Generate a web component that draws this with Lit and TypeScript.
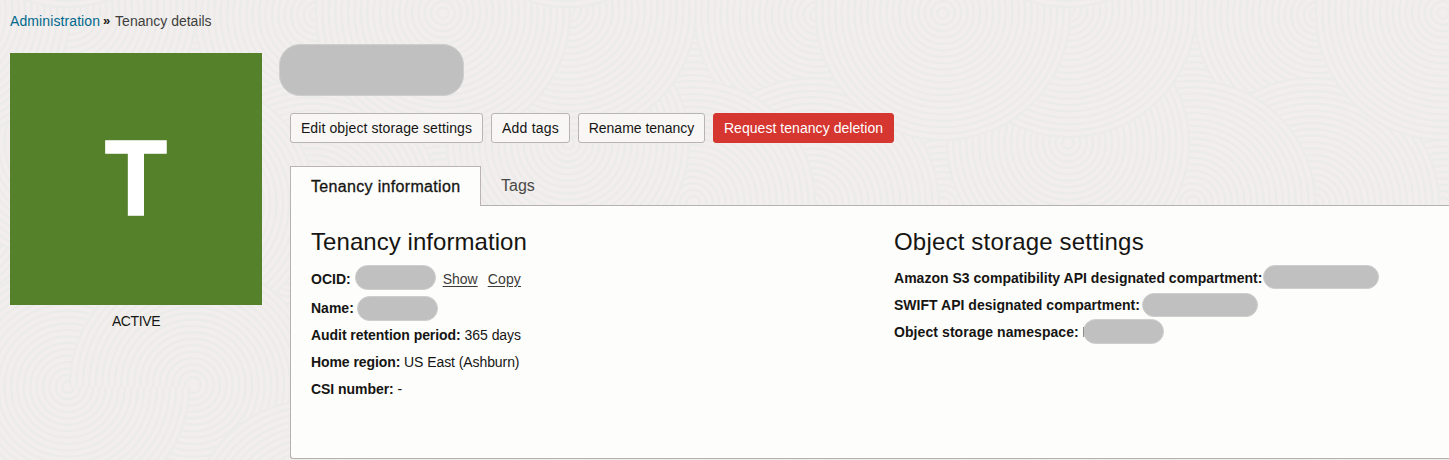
import { LitElement, html, css, svg } from "lit";
import { customElement, property } from "lit/decorators.js";

interface Disc {
  x: number;
  y: number;
  r: number;
  lower?: boolean;
}

// Raked-sand background: overlapping ringed discs, repeated every 500px.
const DISCS: Disc[] = [
  { x: 193, y: 135, r: 125 },
  { x: 443, y: 205, r: 130 },
  { x: 317, y: 15, r: 123 },
  { x: 312, y: 205, r: 128 },
  { x: 193, y: 203, r: 123 },
  { x: 68, y: 143, r: 122 },
  { x: 69, y: 10, r: 128 },
  { x: 443, y: 13, r: 128 },
  { x: 67, y: -115, r: 123 },
  { x: 443, y: 400, r: 125 },
  { x: 68, y: 387, r: 122 },
  { x: 193, y: 385, r: 124 },
  { x: 68, y: 387, r: 122, lower: true },
  { x: 315, y: 525, r: 126 },
];
const PERIOD = 500;
const RING = 6.4;

@customElement("sand-texture")
export class SandTexture extends LitElement {
  static styles = css`
    :host { display: block; }
    svg { display: block; width: 100%; height: 100%; }
    .ground { fill: #f1eeed; }
    .ring { fill: none; stroke: #ebebe9; stroke-width: 2.2; }
  `;

  private disc(d: Disc, shift: number) {
    const x = d.x + shift;
    const radii = Array.from({ length: Math.floor(d.r / RING) }, (_, i) => d.r - 1 - i * RING);
    const arc = (r: number) =>
      d.lower
        ? `M${x - r} ${d.y}A${r} ${r} 0 0 0 ${x + r} ${d.y}`
        : `M${x - r} ${d.y}a${r} ${r} 0 1 0 ${2 * r} 0a${r} ${r} 0 1 0 ${-2 * r} 0`;
    return svg`<path class="ground" d=${arc(d.r)}></path>${radii.map((r) => svg`<path class="ring" d=${arc(r)}></path>`)}`;
  }

  render() {
    return html`<svg aria-hidden="true">
      ${DISCS.map((d) => [-1, 0, 1, 2].map((n) => this.disc(d, n * PERIOD)))}
    </svg>`;
  }
}

@customElement("detail-row")
export class DetailRow extends LitElement {
  @property() label = "";
  static styles = css`
    :host { display: flex; height: 27px; line-height: 27px; white-space: pre; }
    .label { font-weight: 700; }
  `;
  render() {
    return html`<span class="label">${this.label}</span><slot></slot>`;
  }
}

@customElement("app-root")
export class AppRoot extends LitElement {
  static styles = css`
    :host {
      display: block;
      position: relative;
      height: 460px;
      overflow: hidden;
      background: #f1eeed;
      font: 14px/20px "Liberation Sans", Arial, sans-serif;
      color: #161513;
    }
    * { box-sizing: border-box; }
    .texture { position: absolute; inset: 0; }
    .page { position: relative; }
    .crumbs { display: flex; height: 53px; padding: 11px 0 0 10px; color: #3f3e3c; white-space: pre; }
    .crumbs a { color: #00688c; letter-spacing: 0.1px; }
    .sep { width: 15px; padding-left: 3px; font-size: 13px; font-weight: 700; color: #161513; }
    .main { display: grid; grid-template-columns: 252px minmax(0, 1fr); column-gap: 28px; padding-left: 10px; }
    .tile {
      display: flex;
      align-items: center;
      justify-content: center;
      height: 252px;
      background: #54812a;
      color: #fff;
      font-size: 108px;
      font-weight: 700;
    }
    .letter { transform: translateY(-1px) scaleX(0.945); -webkit-text-stroke: 1.5px #fff; }
    .state { margin-top: 6px; text-align: center; letter-spacing: -0.4px; }
    .pill { flex: none; background: #c0c0c0; border: 1px solid #cecece; border-radius: 13px; }
    .title { width: 185px; height: 52px; margin: -9px 0 0 -11px; border-radius: 21px; }
    .actions { display: flex; gap: 8px; margin-top: 17px; }
    button {
      height: 30px;
      padding: 0 0 1px;
      border: 1px solid #b8b4af;
      border-radius: 3px;
      background: #f8f7f5;
      color: #161513;
      font: inherit;
      white-space: nowrap;
    }
    .edit { width: 193px; letter-spacing: 0.11px; }
    .add { width: 79px; letter-spacing: 0.2px; }
    .rename { width: 127px; letter-spacing: -0.03px; }
    .delete { width: 181px; background: #d63630; border-color: #d63630; color: #fff; letter-spacing: 0.05px; }
    .tabs { display: flex; height: 40px; margin-top: 23px; font-size: 16px; line-height: 38px; }
    .tab { padding: 1px 20px 0; color: #4a4947; }
    .active {
      position: relative;
      width: 191px;
      height: 40px;
      padding: 1px 0 0 20px;
      border: 1px solid #bab5b0;
      border-bottom: 0;
      background: #fdfdfb;
      color: #161513;
      letter-spacing: 0.33px;
      -webkit-text-stroke: 0.3px #161513;
      white-space: nowrap;
      z-index: 1;
    }
    .panel {
      display: grid;
      grid-template-columns: 583px 1fr;
      height: 254px;
      margin-top: -1px;
      padding: 22px 0 0 20px;
      border: 1px solid #b5b1ad;
      border-right: 0;
      border-radius: 0 0 0 3px;
      background: #fdfdfb;
    }
    h2 { margin: 0; font-size: 24px; font-weight: 400; line-height: 28px; letter-spacing: 0.06px; }
    .left h2 { margin-bottom: 10px; }
    .right h2 { margin-bottom: 9px; letter-spacing: 0.19px; }
    .ocid { margin-bottom: 2px; }
    .ocid .pill { width: 81px; height: 25px; margin: -1px 7px 0 4px; }
    .name .pill { width: 81px; height: 25px; margin: 1px 0 0 3px; }
    .link { margin-right: 10px; color: #3b3a38; text-decoration: underline; text-underline-offset: 2px; }
    .copy { letter-spacing: 0.15px; }
    .audit { letter-spacing: -0.05px; }
    .home { letter-spacing: -0.08px; }
    .csi { letter-spacing: -0.05px; }
    .s3 { letter-spacing: 0.02px; }
    .s3 .pill { width: 116px; height: 24px; margin: 0 0 0 1px; }
    .swift { letter-spacing: 0.02px; }
    .swift .pill { width: 116px; height: 24px; margin: 1px 0 0 2px; }
    .ns { letter-spacing: 0.08px; }
    .ns .pill { position: relative; width: 81px; height: 25px; margin: 0 0 0 4px; }
    .ns .pill::before { content: ""; position: absolute; left: -1px; top: 7px; width: 1px; height: 10px; background: #8d8d8b; }
  `;

  render() {
    return html`
      <sand-texture class="texture"></sand-texture>
      <div class="page">
        <nav class="crumbs"><a>Administration</a><span class="sep">»</span><span>Tenancy details</span></nav>
        <div class="main">
          <aside>
            <div class="tile"><span class="letter">T</span></div>
            <div class="state">ACTIVE</div>
          </aside>
          <main>
            <div class="pill title"></div>
            <div class="actions">
              <button class="edit">Edit object storage settings</button>
              <button class="add">Add tags</button>
              <button class="rename">Rename tenancy</button>
              <button class="delete">Request tenancy deletion</button>
            </div>
            <div class="tabs">
              <div class="active">Tenancy information</div>
              <div class="tab">Tags</div>
            </div>
            <div class="panel">
              <section class="left">
                <h2>Tenancy information</h2>
                <detail-row class="ocid" label="OCID:"><span class="pill"></span><a class="link">Show</a><a class="link copy">Copy</a></detail-row>
                <detail-row class="name" label="Name:"><span class="pill"></span></detail-row>
                <detail-row class="audit" label="Audit retention period: ">365 days</detail-row>
                <detail-row class="home" label="Home region: ">US East (Ashburn)</detail-row>
                <detail-row class="csi" label="CSI number: ">-</detail-row>
              </section>
              <section class="right">
                <h2>Object storage settings</h2>
                <detail-row class="s3" label="Amazon S3 compatibility API designated compartment:"><span class="pill"></span></detail-row>
                <detail-row class="swift" label="SWIFT API designated compartment:"><span class="pill"></span></detail-row>
                <detail-row class="ns" label="Object storage namespace:"><span class="pill"></span></detail-row>
              </section>
            </div>
          </main>
        </div>
      </div>
    `;
  }
}
